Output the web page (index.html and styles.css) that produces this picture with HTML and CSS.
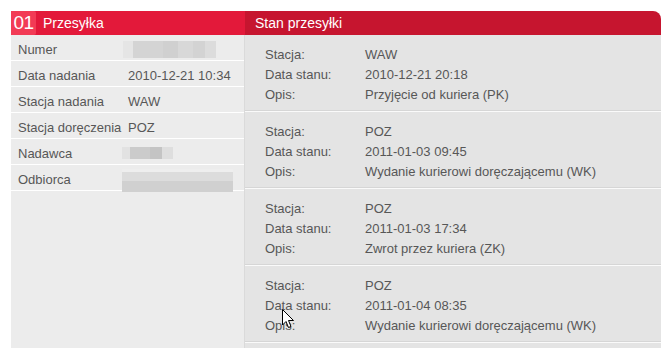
FILE: index.html
```html
<!DOCTYPE html>
<html lang="pl">
<head>
<meta charset="utf-8">
<title>Przesyłka</title>
<link rel="stylesheet" href="styles.css">
</head>
<body>
<div class="panel">
  <div class="head head-left"><span class="num">01</span><span class="title">Przesyłka</span></div>
  <div class="head head-right"><span class="title">Stan przesyłki</span></div>
  <div class="info">
    <div class="row"><span class="lbl">Numer</span><span class="blur blur-num"></span></div>
    <div class="row"><span class="lbl">Data nadania</span><span class="val">2010-12-21 10:34</span></div>
    <div class="row"><span class="lbl">Stacja nadania</span><span class="val">WAW</span></div>
    <div class="row"><span class="lbl">Stacja doręczenia</span><span class="val">POZ</span></div>
    <div class="row"><span class="lbl">Nadawca</span><span class="blur blur-snd"></span></div>
    <div class="row"><span class="lbl">Odbiorca</span><span class="blur blur-rcv"></span></div>
  </div>
  <div class="states">
    <div class="state">
      <div class="srow"><span class="slbl">Stacja:</span><span>WAW</span></div>
      <div class="srow"><span class="slbl">Data stanu:</span><span>2010-12-21 20:18</span></div>
      <div class="srow"><span class="slbl">Opis:</span><span>Przyjęcie od kuriera (PK)</span></div>
    </div>
    <div class="state">
      <div class="srow"><span class="slbl">Stacja:</span><span>POZ</span></div>
      <div class="srow"><span class="slbl">Data stanu:</span><span>2011-01-03 09:45</span></div>
      <div class="srow"><span class="slbl">Opis:</span><span>Wydanie kurierowi doręczającemu (WK)</span></div>
    </div>
    <div class="state">
      <div class="srow"><span class="slbl">Stacja:</span><span>POZ</span></div>
      <div class="srow"><span class="slbl">Data stanu:</span><span>2011-01-03 17:34</span></div>
      <div class="srow"><span class="slbl">Opis:</span><span>Zwrot przez kuriera (ZK)</span></div>
    </div>
    <div class="state">
      <div class="srow"><span class="slbl">Stacja:</span><span>POZ</span></div>
      <div class="srow"><span class="slbl">Data stanu:</span><span>2011-01-04 08:35</span></div>
      <div class="srow"><span class="slbl">Opis:</span><span>Wydanie kurierowi doręczającemu (WK)</span></div>
    </div>
  </div>
</div>
<svg class="cursor" width="13" height="20" viewBox="0 0 13 20"><path d="M0.5 0.5 L0.5 16 L4 12.5 L6.5 18.5 L9 17.5 L6.5 11.5 L11.5 11.5 Z" fill="#fff" stroke="#000" stroke-width="1"/></svg>
</body>
</html>
```
FILE: styles.css
```css
html, body {
  margin: 0;
  padding: 0;
  background: #fff;
}
body {
  padding: 11px 0 0 11px;
  font-family: "Liberation Sans", Arial, sans-serif;
  font-size: 13px;
  color: #575757;
  position: relative;
  height: 356px;
  box-sizing: border-box;
  overflow: hidden;
}
.panel {
  width: 650px;
  display: grid;
  grid-template-columns: 234px 416px;
  grid-template-rows: 24px 313px;
}
.head {
  display: flex;
  align-items: center;
  color: #fff;
  font-size: 14px;
}
.head-left {
  background: #e3193a;
}
.num {
  width: 25px;
  height: 24px;
  background: #f23b55;
  border-radius: 0 2px 2px 0;
  font-size: 19px;
  line-height: 24px;
  text-align: center;
  letter-spacing: -0.5px;
  margin-right: 7px;
}
.head-right {
  background: #c6152f;
  border-top-right-radius: 8px;
  padding-left: 10px;
}
.info {
  background: #ececec;
}
.row {
  height: 22px;
  padding-top: 3px;
  border-bottom: 1px solid #fff;
  display: flex;
  align-items: center;
  padding-left: 7px;
}
.lbl {
  width: 110px;
  flex: none;
}
.blur {
  display: block;
  flex: none;
}
.blur-num {
  width: 93px;
  height: 17px;
  margin-left: -5px;
  background: linear-gradient(90deg, #e5e5e5 0 10px, #d4d4d4 10px 40px, #d0d0d0 40px 55px, #d8d8d8 55px 70px, #d3d3d3 70px 82px, #dcdcdc 82px);
}
.blur-snd {
  width: 51px;
  height: 12px;
  margin-left: -6px;
  background: linear-gradient(90deg, #e2e2e2 0 8px, #cbcbcb 8px 28px, #c4c4c4 28px 40px, #dedede 40px);
}
.blur-rcv {
  width: 111px;
  height: 23px;
  margin-left: -6px;
  margin-top: 3px;
  background: linear-gradient(180deg, #eeeeee 0 3px, #dcdcdc 3px 12px, #d0d0d0 12px);
}
.states {
  background: #e4e4e4;
  border-left: 1px solid #dadada;
  margin-left: -1px;
}
.state {
  padding: 10px 0 6px 20px;
  border-bottom: 1px solid #fafafa;
  box-shadow: inset 0 -1px 0 #d6d6d6;
}
.srow {
  height: 20px;
  line-height: 20px;
  display: flex;
}
.slbl {
  width: 100px;
  flex: none;
}
.cursor {
  position: absolute;
  left: 282px;
  top: 309px;
}
```
